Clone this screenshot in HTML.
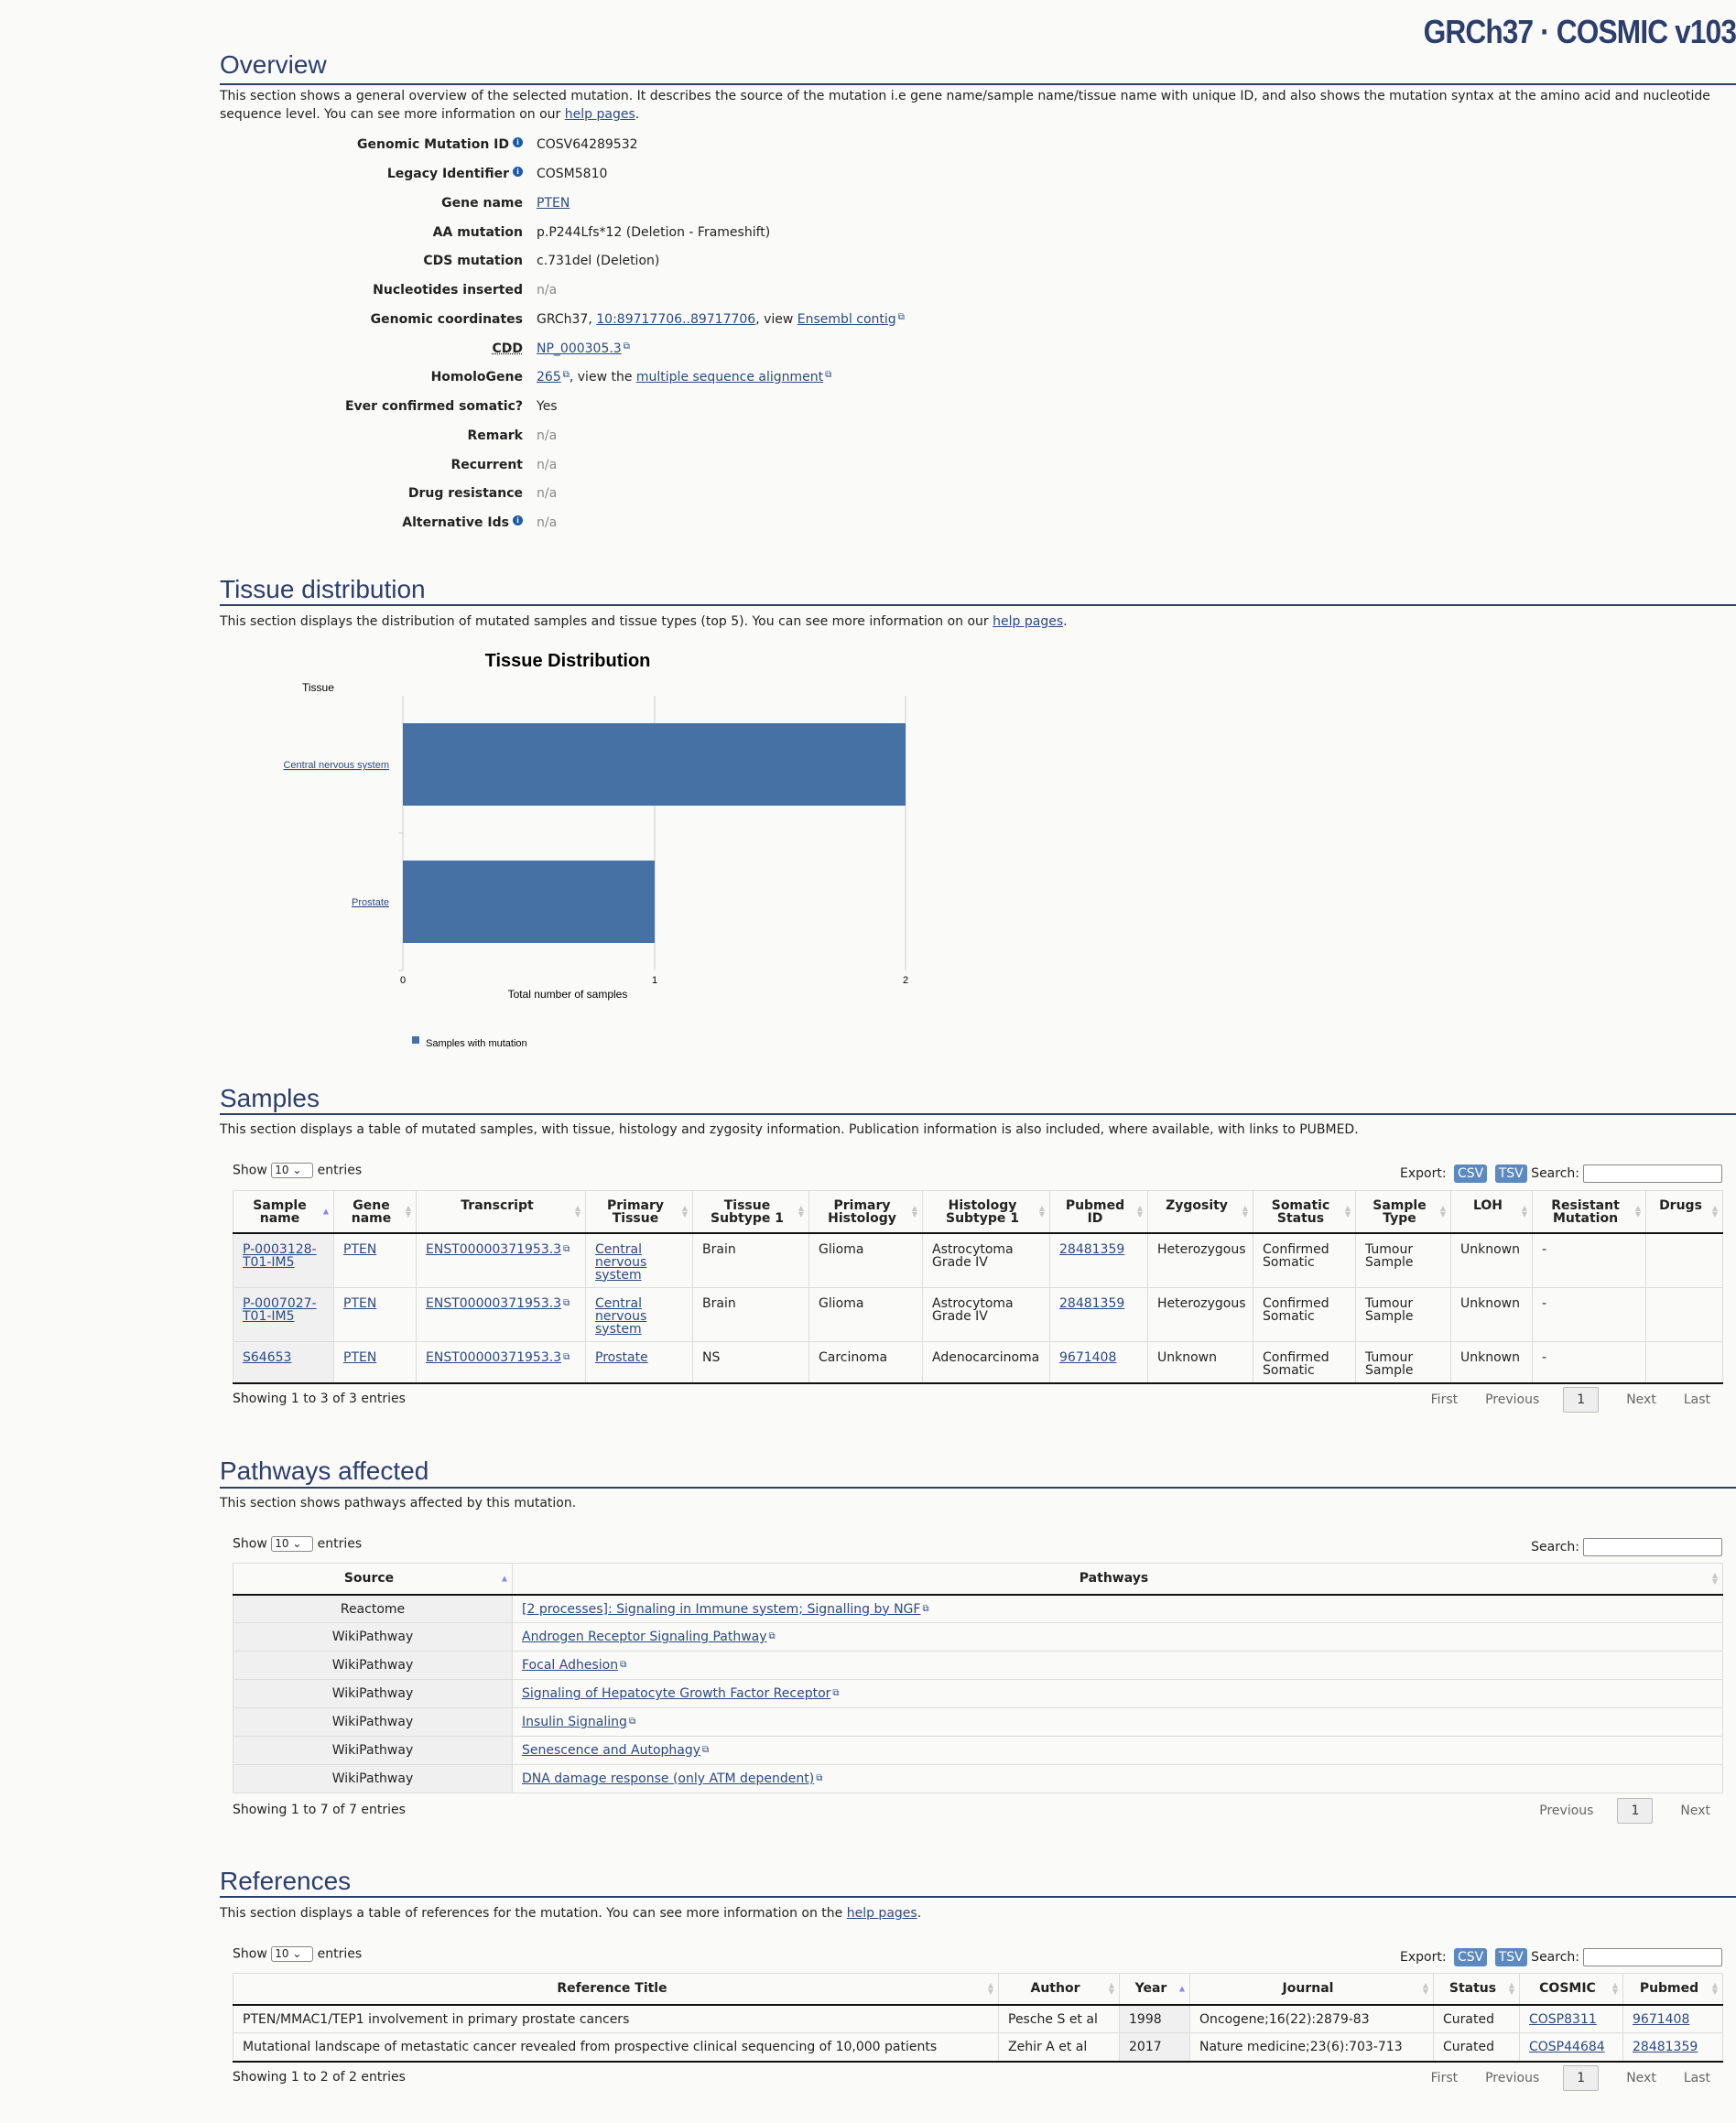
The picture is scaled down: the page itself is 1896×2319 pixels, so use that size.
<!DOCTYPE html>
<html><head><meta charset="utf-8">
<style>
*{box-sizing:border-box}
body{margin:0;width:1896px;height:2319px;background:#fafaf9;font-family:"DejaVu Sans",Verdana,sans-serif;font-size:14px;color:#222;position:relative;overflow:hidden}
a{color:#2b4a80;text-decoration:underline}
.abs{position:absolute}
.brand{position:absolute;right:0;top:14px;font-family:"Liberation Sans",sans-serif;font-size:36px;font-weight:bold;color:#2c3e6b;letter-spacing:-1px;white-space:nowrap;transform:scaleX(0.88);transform-origin:right}
h2{position:absolute;left:240px;margin:0;font-family:"Liberation Sans",sans-serif;font-weight:normal;font-size:28px;color:#2c3e6b}
.rule{position:absolute;left:240px;right:0;height:2px;background:#2c3e6b}
.p{position:absolute;left:240px;width:1650px;line-height:20px}
.lab{position:absolute;right:1325px;font-weight:bold;text-align:right;white-space:nowrap}
.val{position:absolute;left:586px;white-space:nowrap}
.na{color:#888}
.i{display:inline-block;width:11px;height:11px;border-radius:50%;background:#1e5aa8;color:#fff;font-size:9px;line-height:11px;text-align:center;font-weight:bold;vertical-align:top;margin-left:4px;font-family:"Liberation Serif",serif}
.ext{font-size:10px;vertical-align:top;color:#2b4a80;text-decoration:none;margin-left:2px}
table{position:absolute;border-collapse:collapse;table-layout:fixed;font-size:14px}
th{font-weight:bold;text-align:center;border-bottom:2px solid #111;border-right:1px solid #ddd;border-top:1px solid #ddd;padding:9px 16px 4px 8px;line-height:14px;position:relative;vertical-align:top}
th:first-child{border-left:1px solid #ddd}
th .s{position:absolute;right:5px;top:50%;transform:translateY(-50%);color:#c8c8c8;font-size:8px;line-height:7px}
td{border-right:1px solid #ddd;border-bottom:1px solid #ddd;padding:10px 10px 6px;line-height:14px;vertical-align:top}
td:first-child{border-left:1px solid #ddd;background:#f0f0f0}
tr.last td{border-bottom:2px solid #111}
.show{position:absolute;left:254px}
.sel{display:inline-block;width:46px;height:17px;border:1px solid #888;border-radius:3px;font-size:12px;line-height:15px;padding-left:3px;vertical-align:middle;background:#fff}
.exp{position:absolute;right:15px;white-space:nowrap}
.btn{display:inline-block;background:#5b89c0;color:#fff;border-radius:3px;padding:2px 4px;font-size:14px;margin-left:4px}
.srch{display:inline-block;width:152px;height:20px;border:1px solid #888;border-radius:2px;background:#fff;vertical-align:middle;margin-left:4px}
.pag{position:absolute;right:28px;white-space:nowrap;color:#666}
.pag span{margin-left:30px}
.pag .cur{display:inline-block;border:1px solid #bbb;background:#eee;padding:5px 14px;color:#333;border-radius:2px;margin-left:26px}
</style></head><body>
<div class="brand">GRCh37 · COSMIC v103</div>

<h2 style="top:55px">Overview</h2>
<div class="rule" style="top:91px"></div>
<div class="p" style="top:95px">This section shows a general overview of the selected mutation. It describes the source of the mutation i.e gene name/sample name/tissue name with unique ID, and also shows the mutation syntax at the amino acid and nucleotide sequence level. You can see more information on our <a>help pages</a>.</div>

<div class="lab" style="top:150px">Genomic Mutation ID<span class="i">i</span></div><div class="val" style="top:150px">COSV64289532</div>
<div class="lab" style="top:182px">Legacy Identifier<span class="i">i</span></div><div class="val" style="top:182px">COSM5810</div>
<div class="lab" style="top:214px">Gene name</div><div class="val" style="top:214px"><a>PTEN</a></div>
<div class="lab" style="top:246px">AA mutation</div><div class="val" style="top:246px">p.P244Lfs*12 (Deletion - Frameshift)</div>
<div class="lab" style="top:277px">CDS mutation</div><div class="val" style="top:277px">c.731del (Deletion)</div>
<div class="lab" style="top:309px">Nucleotides inserted</div><div class="val na" style="top:309px">n/a</div>
<div class="lab" style="top:341px">Genomic coordinates</div><div class="val" style="top:341px">GRCh37, <a>10:89717706..89717706</a>, view <a>Ensembl contig</a><span class="ext">⧉</span></div>
<div class="lab" style="top:373px;text-decoration:underline dotted">CDD</div><div class="val" style="top:373px"><a>NP_000305.3</a><span class="ext">⧉</span></div>
<div class="lab" style="top:404px">HomoloGene</div><div class="val" style="top:404px"><a>265</a><span class="ext">⧉</span>, view the <a>multiple sequence alignment</a><span class="ext">⧉</span></div>
<div class="lab" style="top:436px">Ever confirmed somatic?</div><div class="val" style="top:436px">Yes</div>
<div class="lab" style="top:468px">Remark</div><div class="val na" style="top:468px">n/a</div>
<div class="lab" style="top:500px">Recurrent</div><div class="val na" style="top:500px">n/a</div>
<div class="lab" style="top:531px">Drug resistance</div><div class="val na" style="top:531px">n/a</div>
<div class="lab" style="top:563px">Alternative Ids<span class="i">i</span></div><div class="val na" style="top:563px">n/a</div>

<h2 style="top:628px">Tissue distribution</h2>
<div class="rule" style="top:660px"></div>
<div class="p" style="top:669px">This section displays the distribution of mutated samples and tissue types (top 5). You can see more information on our <a>help pages</a>.</div>

<svg class="abs" style="left:290px;top:700px" width="720" height="460" font-family="Liberation Sans, sans-serif">
<text x="330" y="28" font-size="20" font-weight="bold" text-anchor="middle" fill="#000">Tissue Distribution</text>
<text x="40" y="55" font-size="12" fill="#000">Tissue</text>
<line x1="150" y1="60" x2="150" y2="360" stroke="#ddd" stroke-width="1.5"/>
<line x1="425" y1="60" x2="425" y2="360" stroke="#ddd" stroke-width="1.5"/>
<line x1="699" y1="60" x2="699" y2="360" stroke="#ddd" stroke-width="1.5"/>
<line x1="145" y1="210" x2="150" y2="210" stroke="#ccc"/>
<line x1="145" y1="360" x2="150" y2="360" stroke="#ccc"/>
<rect x="150" y="90" width="549" height="90" fill="#4571a5"/>
<rect x="150" y="240" width="275" height="90" fill="#4571a5"/>
<text x="135" y="139" font-size="11" fill="#2b4a80" text-anchor="end" text-decoration="underline">Central nervous system</text>
<text x="135" y="289" font-size="11" fill="#2b4a80" text-anchor="end" text-decoration="underline">Prostate</text>
<text x="150" y="374" font-size="11" text-anchor="middle">0</text>
<text x="425" y="374" font-size="11" text-anchor="middle">1</text>
<text x="699" y="374" font-size="11" text-anchor="middle">2</text>
<text x="330" y="390" font-size="12" text-anchor="middle">Total number of samples</text>
<rect x="160" y="432" width="8" height="8" fill="#4571a5"/>
<text x="175" y="443" font-size="11">Samples with mutation</text>
</svg>

<h2 style="top:1184px">Samples</h2>
<div class="rule" style="top:1216px"></div>
<div class="p" style="top:1224px">This section displays a table of mutated samples, with tissue, histology and zygosity information. Publication information is also included, where available, with links to PUBMED.</div>
<div class="show" style="top:1270px">Show <span class="sel">10 ⌄</span> entries</div>
<div class="exp" style="top:1272px">Export: <span class="btn">CSV</span> <span class="btn">TSV</span> Search:<span class="srch"></span></div>
<table style="left:254px;top:1300px;width:1627px">
<colgroup><col style="width:110px"><col style="width:90px"><col style="width:185px"><col style="width:117px"><col style="width:127px"><col style="width:124px"><col style="width:139px"><col style="width:107px"><col style="width:115px"><col style="width:112px"><col style="width:104px"><col style="width:89px"><col style="width:124px"><col style="width:84px"></colgroup>
<tr style="height:46px"><th>Sample name<span class="s" style="color:#8888ee">▲</span></th><th>Gene name<span class="s">▲<br>▼</span></th><th>Transcript<span class="s">▲<br>▼</span></th><th>Primary Tissue<span class="s">▲<br>▼</span></th><th>Tissue Subtype 1<span class="s">▲<br>▼</span></th><th>Primary Histology<span class="s">▲<br>▼</span></th><th>Histology Subtype 1<span class="s">▲<br>▼</span></th><th>Pubmed ID<span class="s">▲<br>▼</span></th><th>Zygosity<span class="s">▲<br>▼</span></th><th>Somatic Status<span class="s">▲<br>▼</span></th><th>Sample Type<span class="s">▲<br>▼</span></th><th>LOH<span class="s">▲<br>▼</span></th><th>Resistant Mutation<span class="s">▲<br>▼</span></th><th>Drugs<span class="s">▲<br>▼</span></th></tr>
<tr style="height:59px"><td><a>P-0003128-T01-IM5</a></td><td><a>PTEN</a></td><td><a>ENST00000371953.3</a><span class="ext">⧉</span></td><td><a>Central nervous system</a></td><td>Brain</td><td>Glioma</td><td>Astrocytoma Grade IV</td><td><a>28481359</a></td><td>Heterozygous</td><td>Confirmed Somatic</td><td>Tumour Sample</td><td>Unknown</td><td>-</td><td></td></tr>
<tr style="height:59px"><td><a>P-0007027-T01-IM5</a></td><td><a>PTEN</a></td><td><a>ENST00000371953.3</a><span class="ext">⧉</span></td><td><a>Central nervous system</a></td><td>Brain</td><td>Glioma</td><td>Astrocytoma Grade IV</td><td><a>28481359</a></td><td>Heterozygous</td><td>Confirmed Somatic</td><td>Tumour Sample</td><td>Unknown</td><td>-</td><td></td></tr>
<tr class="last" style="height:45px"><td><a>S64653</a></td><td><a>PTEN</a></td><td><a>ENST00000371953.3</a><span class="ext">⧉</span></td><td><a>Prostate</a></td><td>NS</td><td>Carcinoma</td><td>Adenocarcinoma</td><td><a>9671408</a></td><td>Unknown</td><td>Confirmed Somatic</td><td>Tumour Sample</td><td>Unknown</td><td>-</td><td></td></tr>
</table>
<div class="show" style="top:1520px">Showing 1 to 3 of 3 entries</div>
<div class="pag" style="top:1515px"><span>First</span><span>Previous</span><span class="cur">1</span><span>Next</span><span>Last</span></div>

<h2 style="top:1591px">Pathways affected</h2>
<div class="rule" style="top:1624px"></div>
<div class="p" style="top:1632px">This section shows pathways affected by this mutation.</div>
<div class="show" style="top:1678px">Show <span class="sel">10 ⌄</span> entries</div>
<div class="exp" style="top:1680px">Search:<span class="srch"></span></div>
<table style="left:254px;top:1707px;width:1627px">
<colgroup><col style="width:305px"><col style="width:1322px"></colgroup>
<tr style="height:34px"><th>Source<span class="s" style="color:#8888ee">▲</span></th><th>Pathways<span class="s">▲<br>▼</span></th></tr>
<tr style="height:31px"><td style="text-align:center;padding:8px 7px 6px">Reactome</td><td style="padding:8px 10px 6px"><a>[2 processes]: Signaling in Immune system; Signalling by NGF</a><span class="ext">⧉</span></td></tr>
<tr style="height:31px"><td style="text-align:center;padding:8px 7px 6px">WikiPathway</td><td style="padding:8px 10px 6px"><a>Androgen Receptor Signaling Pathway</a><span class="ext">⧉</span></td></tr>
<tr style="height:31px"><td style="text-align:center;padding:8px 7px 6px">WikiPathway</td><td style="padding:8px 10px 6px"><a>Focal Adhesion</a><span class="ext">⧉</span></td></tr>
<tr style="height:31px"><td style="text-align:center;padding:8px 7px 6px">WikiPathway</td><td style="padding:8px 10px 6px"><a>Signaling of Hepatocyte Growth Factor Receptor</a><span class="ext">⧉</span></td></tr>
<tr style="height:31px"><td style="text-align:center;padding:8px 7px 6px">WikiPathway</td><td style="padding:8px 10px 6px"><a>Insulin Signaling</a><span class="ext">⧉</span></td></tr>
<tr style="height:31px"><td style="text-align:center;padding:8px 7px 6px">WikiPathway</td><td style="padding:8px 10px 6px"><a>Senescence and Autophagy</a><span class="ext">⧉</span></td></tr>
<tr style="height:31px"><td style="text-align:center;padding:8px 7px 6px">WikiPathway</td><td style="padding:8px 10px 6px"><a>DNA damage response (only ATM dependent)</a><span class="ext">⧉</span></td></tr>
</table>
<div class="show" style="top:1969px">Showing 1 to 7 of 7 entries</div>
<div class="pag" style="top:1964px"><span>Previous</span><span class="cur">1</span><span>Next</span></div>

<h2 style="top:2039px">References</h2>
<div class="rule" style="top:2071px"></div>
<div class="p" style="top:2080px">This section displays a table of references for the mutation. You can see more information on the <a>help pages</a>.</div>
<div class="show" style="top:2126px">Show <span class="sel">10 ⌄</span> entries</div>
<div class="exp" style="top:2128px">Export: <span class="btn">CSV</span> <span class="btn">TSV</span> Search:<span class="srch"></span></div>
<table style="left:254px;top:2155px;width:1627px">
<colgroup><col style="width:836px"><col style="width:132px"><col style="width:77px"><col style="width:266px"><col style="width:94px"><col style="width:113px"><col style="width:109px"></colgroup>
<tr style="height:34px"><th>Reference Title<span class="s">▲<br>▼</span></th><th>Author<span class="s">▲<br>▼</span></th><th>Year<span class="s" style="color:#8888ee">▲</span></th><th>Journal<span class="s">▲<br>▼</span></th><th>Status<span class="s">▲<br>▼</span></th><th>COSMIC<span class="s">▲<br>▼</span></th><th>Pubmed<span class="s">▲<br>▼</span></th></tr>
<tr style="height:31px"><td style="background:none;padding:8px 10px 6px">PTEN/MMAC1/TEP1 involvement in primary prostate cancers</td><td style="padding:8px 10px 6px">Pesche S et al</td><td style="background:#f0f0f0;padding:8px 10px 6px">1998</td><td style="padding:8px 10px 6px">Oncogene;16(22):2879-83</td><td style="padding:8px 10px 6px">Curated</td><td style="padding:8px 10px 6px"><a>COSP8311</a></td><td style="padding:8px 10px 6px"><a>9671408</a></td></tr>
<tr class="last" style="height:31px"><td style="background:none;padding:8px 10px 6px">Mutational landscape of metastatic cancer revealed from prospective clinical sequencing of 10,000 patients</td><td style="padding:8px 10px 6px">Zehir A et al</td><td style="background:#f0f0f0;padding:8px 10px 6px">2017</td><td style="padding:8px 10px 6px">Nature medicine;23(6):703-713</td><td style="padding:8px 10px 6px">Curated</td><td style="padding:8px 10px 6px"><a>COSP44684</a></td><td style="padding:8px 10px 6px"><a>28481359</a></td></tr>
</table>
<div class="show" style="top:2261px">Showing 1 to 2 of 2 entries</div>
<div class="pag" style="top:2256px"><span>First</span><span>Previous</span><span class="cur">1</span><span>Next</span><span>Last</span></div>
</body></html>
